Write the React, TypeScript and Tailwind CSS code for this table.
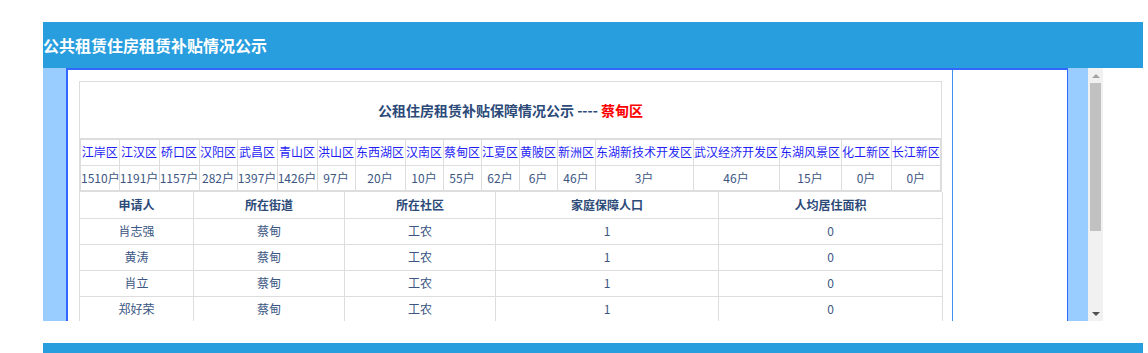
const districts = [
  { name: "江岸区", n: "1510户", w: "w-[38px]" },
  { name: "江汉区", n: "1191户", w: "w-[40px]" },
  { name: "硚口区", n: "1157户", w: "w-[40px]" },
  { name: "汉阳区", n: "282户", w: "w-[38px]" },
  { name: "武昌区", n: "1397户", w: "w-[40px]" },
  { name: "青山区", n: "1426户", w: "w-[40px]" },
  { name: "洪山区", n: "97户", w: "w-[38px]" },
  { name: "东西湖区", n: "20户", w: "w-[50px]" },
  { name: "汉南区", n: "10户", w: "w-[38px]" },
  { name: "蔡甸区", n: "55户", w: "w-[38px]" },
  { name: "江夏区", n: "62户", w: "w-[38px]" },
  { name: "黄陂区", n: "6户", w: "w-[38px]" },
  { name: "新洲区", n: "46户", w: "w-[38px]" },
  { name: "东湖新技术开发区", n: "3户", w: "w-[98px]" },
  { name: "武汉经济开发区", n: "46户", w: "w-[86px]" },
  { name: "东湖风景区", n: "15户", w: "w-[62px]" },
  { name: "化工新区", n: "0户", w: "w-[50px]" },
  { name: "长江新区", n: "0户", w: "w-[49px]" },
];

const columns = [
  { title: "申请人", w: "w-[114px]" },
  { title: "所在街道", w: "w-[151px]" },
  { title: "所在社区", w: "w-[151px]" },
  { title: "家庭保障人口", w: "w-[223px]" },
  { title: "人均居住面积", w: "w-[224px]" },
];

const rows = [
  ["肖志强", "蔡甸", "工农", "1", "0"],
  ["黄涛", "蔡甸", "工农", "1", "0"],
  ["肖立", "蔡甸", "工农", "1", "0"],
  ["郑好荣", "蔡甸", "工农", "1", "0"],
];

export default function App() {
  return (
    <div className="w-[1148px] h-[353px] bg-white overflow-hidden font-['Noto_Sans_CJK_SC','Noto_Sans',sans-serif]">
      <div className="pt-[22px] pl-[43px] w-[1143px]">
        {/* Header bar */}
        <div className="h-[46px] bg-[#299ede] flex items-center text-white font-bold text-[16px] leading-none">
          公共租赁住房租赁补贴情况公示
        </div>

        <div className="flex h-[253px]">
          {/* Light blue frame */}
          <div className="w-[1045px] bg-[#99ccff] pl-[23px] pr-[20px] flex">
            <div className="w-[1002px] h-full bg-white border-l-2 border-t-2 border-r border-[#3366ff] flex overflow-hidden">
              <div className="w-[885px] border-r border-[#3b93ee] pl-[11px] pr-[10px] pt-[11px] text-[12px] leading-none text-[#3b5683]">
                {/* Title */}
                <div className="h-[57px] border-t border-l border-r border-[#dddddd] flex items-center justify-center font-bold text-[14px] text-[#2c4a78]">
                  公租住房租赁补贴保障情况公示 ----&nbsp;<span className="text-[#ff0000]">蔡甸区</span>
                </div>

                {/* Districts */}
                <div className="border-2 border-[#dddddd]">
                  <table className="table-fixed border-collapse w-[859px]">
                    <colgroup>
                      {districts.map((d) => (
                        <col key={d.name} className={d.w} />
                      ))}
                    </colgroup>
                    <tbody>
                      <tr>
                        {districts.map((d) => (
                          <td
                            key={d.name}
                            className="h-[25px] p-0 border border-[#dddddd] first:border-l-0 last:border-r-0 border-t-0 text-center text-[#1f1ff5] whitespace-nowrap"
                          >
                            {d.name}
                          </td>
                        ))}
                      </tr>
                      <tr>
                        {districts.map((d) => (
                          <td
                            key={d.name}
                            className="h-[25px] p-0 border border-[#dddddd] first:border-l-0 last:border-r-0 border-b-0 text-center whitespace-nowrap"
                          >
                            {d.n}
                          </td>
                        ))}
                      </tr>
                    </tbody>
                  </table>
                </div>

                {/* Applicants */}
                <table className="table-fixed border-collapse w-[863px]">
                  <colgroup>
                    {columns.map((c) => (
                      <col key={c.title} className={c.w} />
                    ))}
                  </colgroup>
                  <thead>
                    <tr>
                      {columns.map((c) => (
                        <th
                          key={c.title}
                          className="h-[26px] p-0 border border-t-0 border-[#dddddd] text-center font-bold text-[#2c4a78]"
                        >
                          {c.title}
                        </th>
                      ))}
                    </tr>
                  </thead>
                  <tbody>
                    {rows.map((r, i) => (
                      <tr key={i}>
                        {r.map((v, j) => (
                          <td key={j} className="h-[26px] p-0 border border-[#dddddd] text-center">
                            {v}
                          </td>
                        ))}
                      </tr>
                    ))}
                  </tbody>
                </table>
              </div>
            </div>
          </div>

          {/* Scrollbar */}
          <div className="w-[15px] h-full bg-[#f1f1f1] flex flex-col items-center">
            <div className="h-[15px] w-full flex items-center justify-center">
              <div className="w-0 h-0 border-l-[4px] border-r-[4px] border-b-[4px] border-l-transparent border-r-transparent border-b-[#a3a3a3]" />
            </div>
            <div className="w-[11px] h-[148px] bg-[#c1c1c1]" />
            <div className="flex-1" />
            <div className="h-[15px] w-full flex items-center justify-center">
              <div className="w-0 h-0 border-l-[4px] border-r-[4px] border-t-[4px] border-l-transparent border-r-transparent border-t-[#505050]" />
            </div>
          </div>
        </div>

        <div className="h-[22px]" />
        <div className="h-[10px] bg-[#299ede]" />
      </div>
    </div>
  );
}
